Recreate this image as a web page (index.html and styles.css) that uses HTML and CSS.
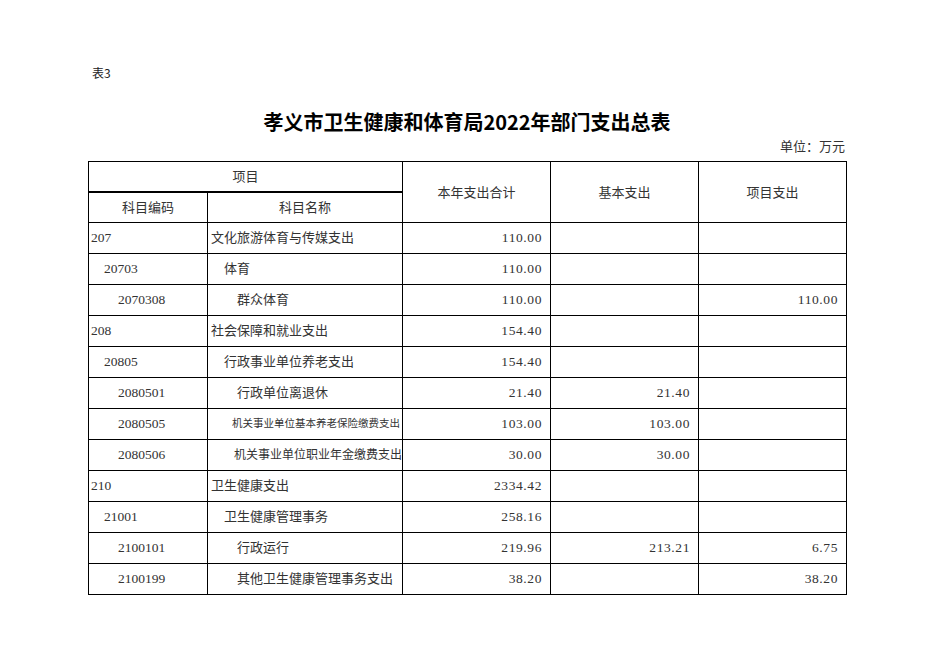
FILE: index.html
```
<!DOCTYPE html>
<html lang="zh-CN">
<head>
<meta charset="utf-8">
<title>孝义市卫生健康和体育局2022年部门支出总表</title>
<link rel="stylesheet" href="styles.css">
</head>
<body>
<div class="page">
  <div class="tbl-no">表3</div>
  <h1 class="title">孝义市卫生健康和体育局2022年部门支出总表</h1>
  <div class="unit">单位：万元</div>
  <table class="sheet">
    <colgroup>
      <col class="c-code"><col class="c-name"><col class="c-num"><col class="c-num"><col class="c-num">
    </colgroup>
    <thead>
      <tr class="h1">
        <th colspan="2" class="proj">项目</th>
        <th rowspan="2">本年支出合计</th>
        <th rowspan="2">基本支出</th>
        <th rowspan="2">项目支出</th>
      </tr>
      <tr class="h2">
        <th>科目编码</th>
        <th>科目名称</th>
      </tr>
    </thead>
    <tbody>
      <tr><td class="code l1">207</td><td class="name l1">文化旅游体育与传媒支出</td><td class="num">110.00</td><td class="num"></td><td class="num"></td></tr>
      <tr><td class="code l2">20703</td><td class="name l2">体育</td><td class="num">110.00</td><td class="num"></td><td class="num"></td></tr>
      <tr><td class="code l3">2070308</td><td class="name l3">群众体育</td><td class="num">110.00</td><td class="num"></td><td class="num">110.00</td></tr>
      <tr><td class="code l1">208</td><td class="name l1">社会保障和就业支出</td><td class="num">154.40</td><td class="num"></td><td class="num"></td></tr>
      <tr><td class="code l2">20805</td><td class="name l2">行政事业单位养老支出</td><td class="num">154.40</td><td class="num"></td><td class="num"></td></tr>
      <tr><td class="code l3">2080501</td><td class="name l3">行政单位离退休</td><td class="num">21.40</td><td class="num">21.40</td><td class="num"></td></tr>
      <tr><td class="code l3">2080505</td><td class="name l3 fit-s">机关事业单位基本养老保险缴费支出</td><td class="num">103.00</td><td class="num">103.00</td><td class="num"></td></tr>
      <tr><td class="code l3">2080506</td><td class="name l3 fit-m">机关事业单位职业年金缴费支出</td><td class="num">30.00</td><td class="num">30.00</td><td class="num"></td></tr>
      <tr><td class="code l1">210</td><td class="name l1">卫生健康支出</td><td class="num">2334.42</td><td class="num"></td><td class="num"></td></tr>
      <tr><td class="code l2">21001</td><td class="name l2">卫生健康管理事务</td><td class="num">258.16</td><td class="num"></td><td class="num"></td></tr>
      <tr><td class="code l3">2100101</td><td class="name l3">行政运行</td><td class="num">219.96</td><td class="num">213.21</td><td class="num">6.75</td></tr>
      <tr><td class="code l3">2100199</td><td class="name l3">其他卫生健康管理事务支出</td><td class="num">38.20</td><td class="num"></td><td class="num">38.20</td></tr>
    </tbody>
  </table>
</div>
</body>
</html>
```
FILE: styles.css
```
html, body {
  margin: 0;
  padding: 0;
  background: #ffffff;
}
body {
  font-family: "Noto Sans CJK SC", "Noto Sans", sans-serif;
  color: #111;
}
.page {
  width: 758px;
  padding: 64px 0 0 88px;
}
.tbl-no {
  height: 18px;
  line-height: 18px;
  font-size: 12px;
  padding-left: 4px;
  color: #222;
}
.title {
  margin: 25px 0 0 0;
  height: 30px;
  line-height: 30px;
  font-size: 20px;
  font-weight: bold;
  text-align: center;
  color: #000;
}
.unit {
  height: 18px;
  line-height: 18px;
  font-size: 13px;
  text-align: right;
  padding-right: 1px;
  color: #333;
}
.sheet {
  margin-top: 6px;
  width: 758px;
  border-collapse: collapse;
  table-layout: fixed;
  font-size: 13px;
}
.c-code { width: 119px; }
.c-name { width: 195px; }
.c-num { width: 148px; }
.sheet th, .sheet td {
  border: 1px solid #000;
  padding: 0;
  white-space: nowrap;
  overflow: hidden;
  line-height: 16px;
  vertical-align: middle;
}
.sheet th {
  font-weight: normal;
  text-align: center;
  color: #333;
}
.sheet tr.h1 { height: 30px; }
.sheet tr.h2 { height: 31px; }
.sheet th.proj { border-bottom: 2px solid #000; }
.sheet tbody tr { height: 31px; }
.sheet td { color: #333; }
.code {
  font-family: "Liberation Serif", serif;
  font-size: 13.5px;
}
.code.l1 { padding-left: 2px; }
.code.l2 { padding-left: 15px; }
.code.l3 { padding-left: 29px; }
.name { padding-bottom: 3px !important; }
.name.l1 { padding-left: 3px; }
.name.l2 { padding-left: 16px; }
.name.l3 { padding-left: 29px; }
.name.fit-s { font-size: 10.5px; padding-left: 24px; }
.name.fit-m { font-size: 12px; padding-left: 26px; }
.num {
  text-align: right;
  padding-right: 8px !important;
  font-family: "Liberation Serif", serif;
  font-size: 13.5px;
  letter-spacing: 0.6px;
}
```
